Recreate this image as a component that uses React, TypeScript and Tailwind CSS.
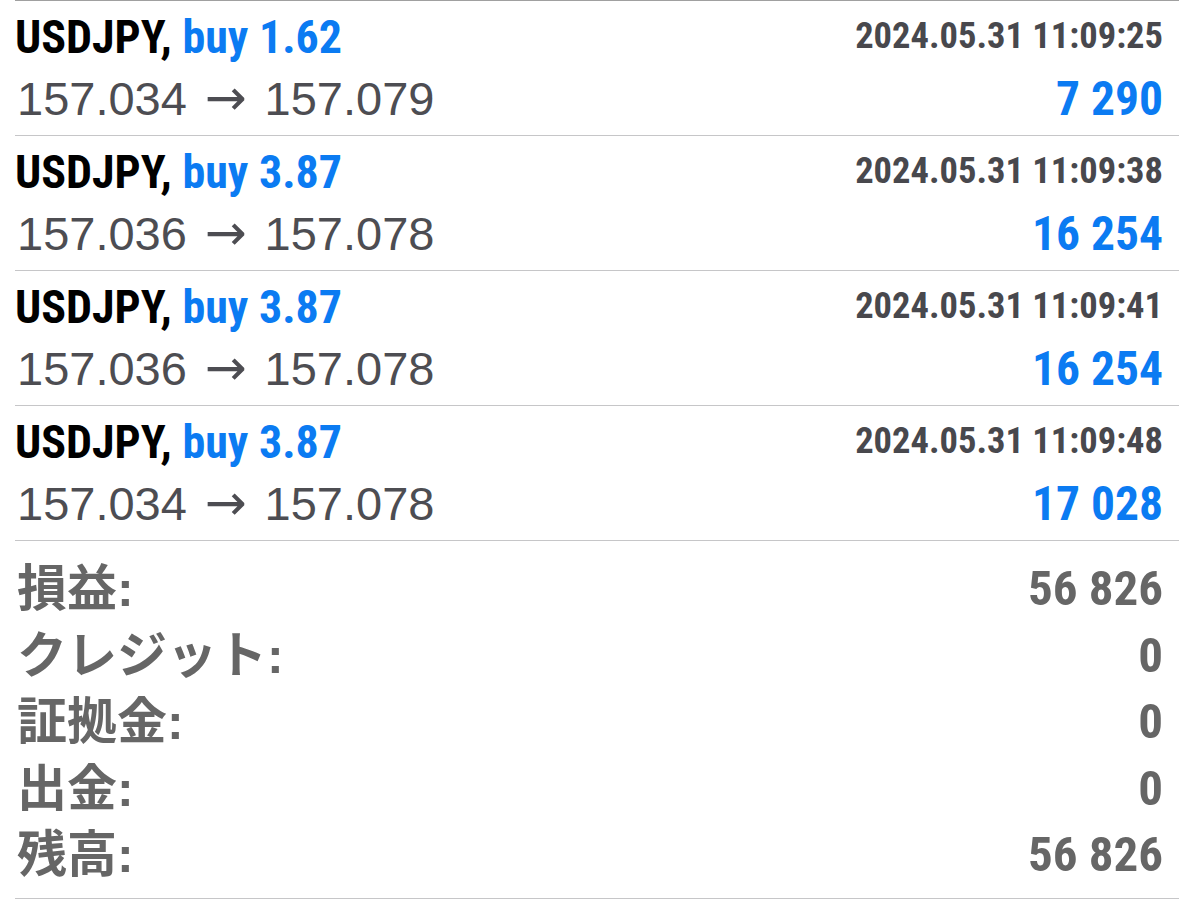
import React from 'react';

type Trade = { symbol: string; side: string; lots: string; time: string; open: string; close: string; profit: string };

const trades: Trade[] = [
  { symbol: 'USDJPY', side: 'buy', lots: '1.62', time: '2024.05.31 11:09:25', open: '157.034', close: '157.079', profit: '7 290' },
  { symbol: 'USDJPY', side: 'buy', lots: '3.87', time: '2024.05.31 11:09:38', open: '157.036', close: '157.078', profit: '16 254' },
  { symbol: 'USDJPY', side: 'buy', lots: '3.87', time: '2024.05.31 11:09:41', open: '157.036', close: '157.078', profit: '16 254' },
  { symbol: 'USDJPY', side: 'buy', lots: '3.87', time: '2024.05.31 11:09:48', open: '157.034', close: '157.078', profit: '17 028' },
];

const totals = [
  { label: '損益:', value: '56 826' },
  { label: 'クレジット:', value: '0' },
  { label: '証拠金:', value: '0' },
  { label: '出金:', value: '0' },
  { label: '残高:', value: '56 826' },
];

// condensed bold, like the iOS app's numerals
const cond = "font-['Roboto_Condensed',Roboto,'Liberation_Sans',sans-serif] font-bold font-stretch-condensed";

const TradeRow = ({ t }: { t: Trade }) => (
  <div className="ml-[15px] h-[135px] border-b border-[#c6c6c8] pt-[8px] pr-[16px]">
    <div className="flex justify-between items-start h-[56px]">
      <div className={`${cond} text-[46px] leading-[56px] text-black`}>
        {t.symbol}, <span className="text-[#0b7bf2]">{t.side} {t.lots}</span>
      </div>
      <div className={`${cond} text-[36.5px] leading-[53px] text-[#48484d]`}>{t.time}</div>
    </div>
    <div className="flex justify-between items-start h-[66px]">
      <div className="font-['Liberation_Sans',Arial,sans-serif] text-[47px] leading-[66px] text-[#4d4d52] pl-[2px]">
        {t.open}
        <span className="font-['DejaVu_Sans',sans-serif] text-[50px] mx-[2px]"> → </span>
        {t.close}
      </div>
      <div className={`${cond} text-[47.5px] leading-[69px] text-[#0b7bf2]`}>{t.profit}</div>
    </div>
  </div>
);

export default function App() {
  return (
    <div className="w-[1179px] h-[903px] bg-white overflow-hidden">
      <div className="ml-[15px] border-t border-[#a0a0a0]" />
      {trades.map((t, i) => (
        <TradeRow key={i} t={t} />
      ))}
      <div className="ml-[15px] pt-[15px] pb-[9px] pr-[16px] border-b border-[#c6c6c8]">
        {totals.map((r) => (
          <div key={r.label} className="flex justify-between items-center h-[66.5px]">
            <div className="font-['Liberation_Sans','Noto_Sans_CJK_JP',sans-serif] font-bold text-[50px] leading-[66px] text-[#666666] pl-[2px]">
              {r.label}
            </div>
            <div className={`${cond} text-[49px] leading-[66px] text-[#666666]`}>{r.value}</div>
          </div>
        ))}
      </div>
    </div>
  );
}
